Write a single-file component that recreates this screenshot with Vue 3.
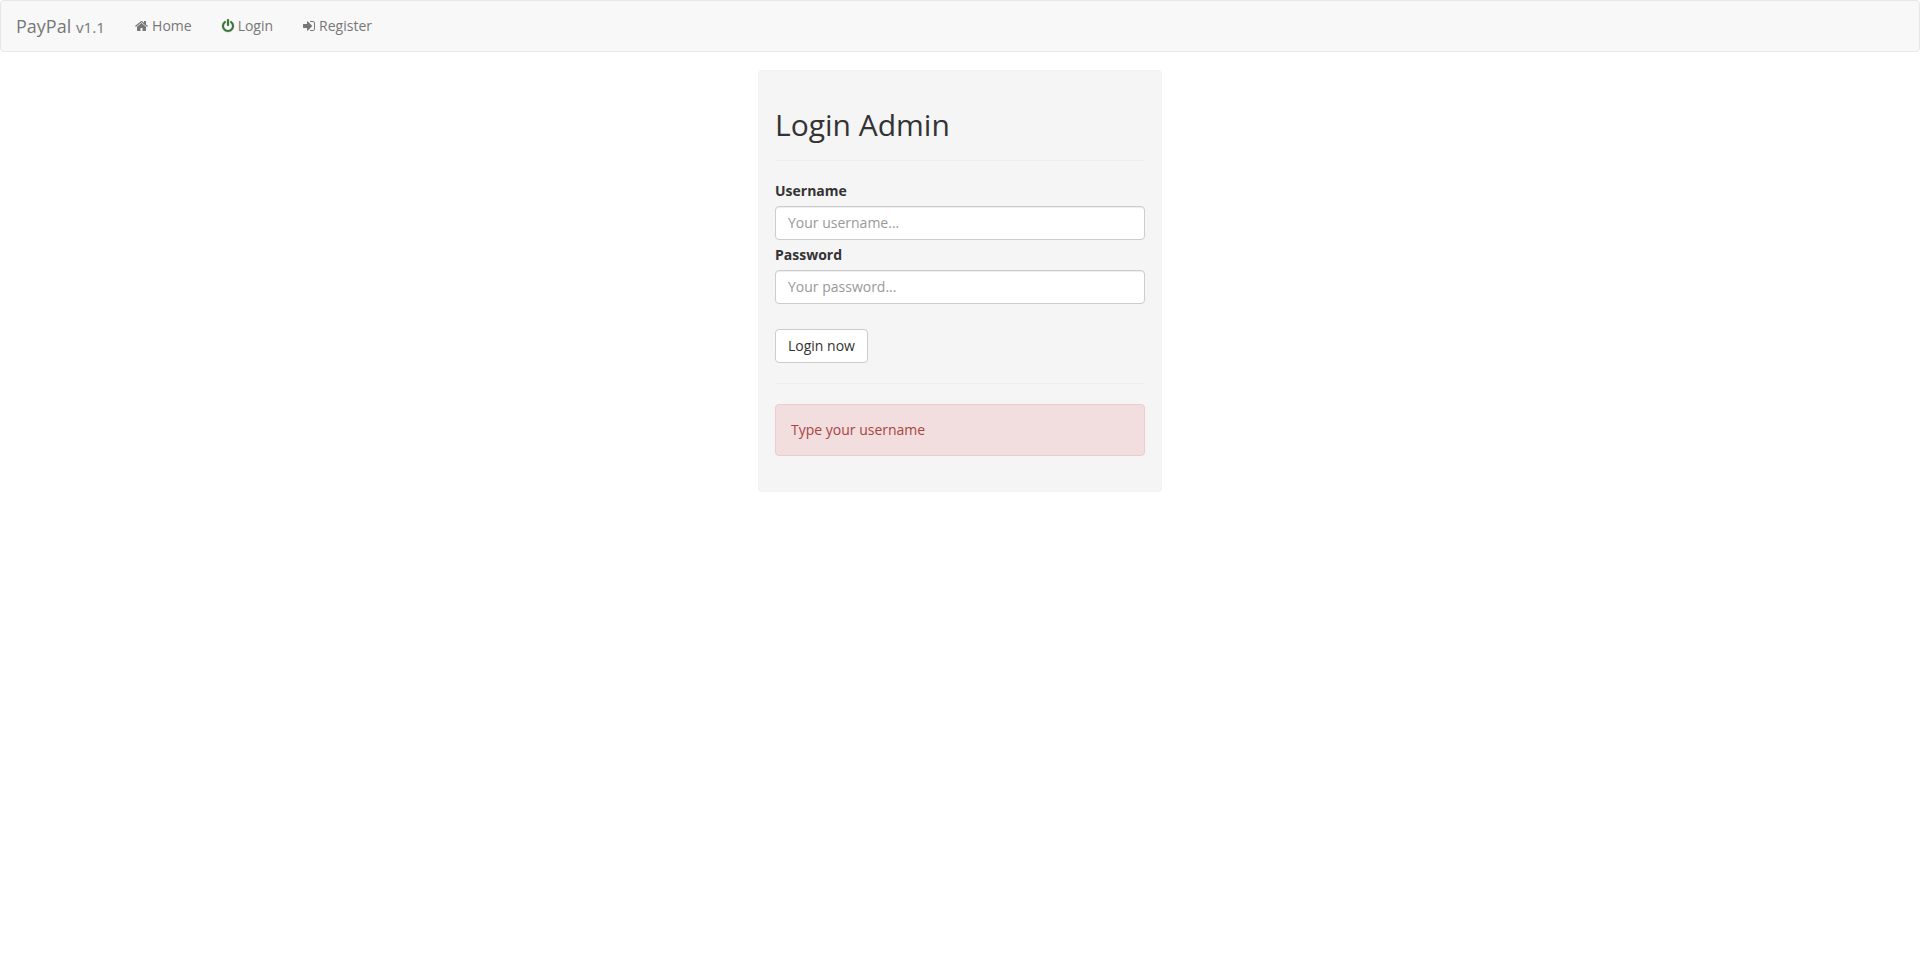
<script setup>
import { ref } from 'vue'

const username = ref('')
const password = ref('')
const message = ref('Type your username')

const links = [
  {
    label: 'Home',
    tone: 'plain',
    width: 13,
    box: '64 0 1664 1792',
    path: 'M1472 992v480q0 26-19 45t-45 19h-384v-384h-256v384h-384q-26 0-45-19t-19-45v-480q0-1 .5-3t.5-3l575-474 575 474q1 2 1 6zm223-69l-62 74q-8 9-21 11h-3q-13 0-21-7l-692-577-692 577q-12 8-24 7-13-2-21-11l-62-74q-8-10-7-23.5t11-21.5l719-599q32-26 76-26t76 26l244 204v-195q0-14 9-23t23-9h192q14 0 23 9t9 23v408l219 182q10 8 11 21.5t-7 23.5z',
  },
  {
    label: 'Login',
    tone: 'success',
    width: 12,
    box: '128 0 1536 1792',
    path: 'M1664 896q0 156-61 298t-164 245-245 164-298 61-298-61-245-164-164-245-61-298q0-182 80.5-343t226.5-270q43-32 95.5-25t83.5 50q32 42 24.5 94.5t-49.5 84.5q-98 74-151.5 181t-53.5 228q0 104 40.5 198.5t109.5 163.5 163.5 109.5 198.5 40.5 198.5-40.5 163.5-109.5 109.5-163.5 40.5-198.5q0-121-53.5-228t-151.5-181q-42-32-49.5-84.5t24.5-94.5q31-43 84-50t95 25q146 109 226.5 270t80.5 343zm-640-768v640q0 52-38 90t-90 38-90-38-38-90v-640q0-52 38-90t90-38 90 38 38 90z',
  },
  {
    label: 'Register',
    tone: 'plain',
    width: 12,
    box: '128 0 1536 1792',
    path: 'M1312 896q0 26-19 45l-544 544q-19 19-45 19t-45-19-19-45v-288h-448q-26 0-45-19t-19-45v-384q0-26 19-45t45-19h448v-288q0-26 19-45t45-19 45 19l544 544q19 19 19 45zm352-352v704q0 119-84.5 203.5t-203.5 84.5h-320q-13 0-22.5-9.5t-9.5-22.5q0-4-1-20t-.5-26.5 3-23.5 10-19.5 20.5-6.5h320q66 0 113-47t47-113v-704q0-66-47-113t-113-47h-312l-11.5-1-11.5-3-8-5.5-7-9-2-13.5q0-4-1-20t-.5-26.5 3-23.5 10-19.5 20.5-6.5h320q119 0 203.5 84.5t84.5 203.5z',
  },
]

function submit() {
  if (!username.value) message.value = 'Type your username'
  else if (!password.value) message.value = 'Type your password'
  else message.value = ''
}
</script>

<template>
  <div class="page">
    <nav class="navbar">
      <a class="brand" href="#">PayPal <small>v1.1</small></a>
      <ul class="links">
        <li v-for="link in links" :key="link.label">
          <a class="link" href="#">
            <svg class="icon" :class="link.tone" :width="link.width" height="14" :viewBox="link.box" aria-hidden="true">
              <path :d="link.path" />
            </svg>
            <span>{{ link.label }}</span>
          </a>
        </li>
      </ul>
    </nav>

    <main class="card">
      <h2 class="title">Login Admin</h2>
      <hr class="rule" />
      <form class="form" novalidate @submit.prevent="submit">
        <label class="label" for="username">Username</label>
        <input id="username" v-model="username" class="field" type="text" placeholder="Your username..." />
        <label class="label" for="password">Password</label>
        <input id="password" v-model="password" class="field" type="password" placeholder="Your password..." />
        <button class="button" type="submit">Login now</button>
      </form>
      <hr class="rule" />
      <div v-if="message" class="alert" role="alert">{{ message }}</div>
    </main>
  </div>
</template>

<style>
body {
  background: #fff;
}
</style>

<style scoped>
.page,
.page * {
  box-sizing: border-box;
}

.page {
  font-family: "Open Sans", "Noto Sans", sans-serif;
  font-size: 14px;
  line-height: 20px;
  color: #333;
}

.navbar {
  display: flex;
  background: #f8f8f8;
  border: 1px solid #e7e7e7;
  border-radius: 4px;
}

.brand {
  padding: 15px;
  font-size: 18px;
  color: #777;
  text-decoration: none;
}

.brand small {
  font-size: 85%;
  line-height: 1;
}

.links {
  display: flex;
  margin: 0;
  padding: 0;
  list-style: none;
}

.link {
  display: flex;
  align-items: center;
  gap: 4px;
  padding: 15px;
  color: #777;
  text-decoration: none;
}

.icon {
  overflow: visible;
  fill: currentColor;
}

.success {
  color: #3c763d;
  stroke: currentColor;
  stroke-width: 30;
}

.card {
  width: 100%;
  max-width: 404px;
  margin: 18px auto 0;
  padding: 36px 16px 35px;
  background: #f5f5f5;
  border: 1px solid #f2f2f2;
  border-radius: 4px;
}

.title {
  margin: 0;
  font-size: 30px;
  line-height: 36px;
  font-weight: 400;
}

.rule {
  margin: 20px 0;
  border: 0;
  border-top: 1px solid #eee;
}

.title + .rule {
  margin-top: 17px;
}

.form {
  display: flex;
  flex-direction: column;
  align-items: flex-start;
}

.label {
  margin-bottom: 5px;
  font-weight: 700;
}

.field {
  width: 100%;
  height: 34px;
  margin: 0 0 5px;
  padding: 5px 12px 7px;
  font: inherit;
  color: #555;
  background: #fff;
  border: 1px solid #ccc;
  border-radius: 4px;
  box-shadow: inset 0 1px 1px rgba(0, 0, 0, 0.075);
}

.field::placeholder {
  color: #999;
  opacity: 1;
}

.button {
  margin: 20px 0 0;
  padding: 6px 12px;
  font: inherit;
  color: #333;
  background: #fff;
  border: 1px solid #ccc;
  border-radius: 4px;
  cursor: pointer;
}

.alert {
  padding: 15px;
  color: #a94442;
  background: #f2dede;
  border: 1px solid #ebccd1;
  border-radius: 4px;
}
</style>
